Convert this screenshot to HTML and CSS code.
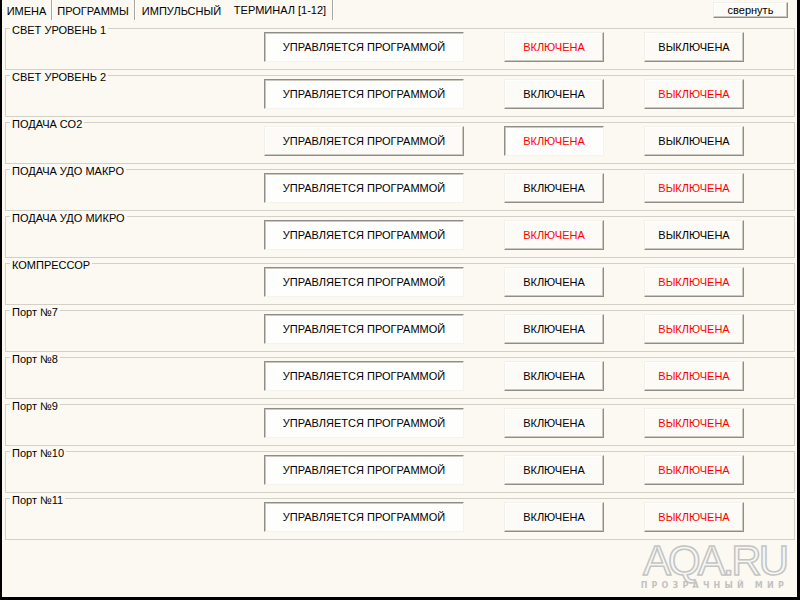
FILE: index.html
```html
<!DOCTYPE html>
<html lang="ru">
<head>
<meta charset="utf-8">
<title>Терминал</title>
<link rel="stylesheet" href="styles.css">
</head>
<body>
<div class="screen">
  <div class="topbar">
    <div class="tabs">
      <div class="tab t1 sep">ИМЕНА</div>
      <div class="tab t2 sep">ПРОГРАММЫ</div>
      <div class="tab t3">ИМПУЛЬСНЫЙ</div>
      <div class="tab t4 sep active">ТЕРМИНАЛ [1-12]</div>
    </div>
    <div class="btn collapse">свернуть</div>
  </div>
  <div class="groups">
    <div class="group"><div class="legend">СВЕТ УРОВЕНЬ 1</div><div class="btn prog down">УПРАВЛЯЕТСЯ ПРОГРАММОЙ</div><div class="btn on red">ВКЛЮЧЕНА</div><div class="btn off">ВЫКЛЮЧЕНА</div></div>
    <div class="group"><div class="legend">СВЕТ УРОВЕНЬ 2</div><div class="btn prog down">УПРАВЛЯЕТСЯ ПРОГРАММОЙ</div><div class="btn on">ВКЛЮЧЕНА</div><div class="btn off red">ВЫКЛЮЧЕНА</div></div>
    <div class="group"><div class="legend">ПОДАЧА СО2</div><div class="btn prog">УПРАВЛЯЕТСЯ ПРОГРАММОЙ</div><div class="btn on red down">ВКЛЮЧЕНА</div><div class="btn off">ВЫКЛЮЧЕНА</div></div>
    <div class="group"><div class="legend">ПОДАЧА УДО МАКРО</div><div class="btn prog down">УПРАВЛЯЕТСЯ ПРОГРАММОЙ</div><div class="btn on">ВКЛЮЧЕНА</div><div class="btn off red">ВЫКЛЮЧЕНА</div></div>
    <div class="group"><div class="legend">ПОДАЧА УДО МИКРО</div><div class="btn prog down">УПРАВЛЯЕТСЯ ПРОГРАММОЙ</div><div class="btn on red">ВКЛЮЧЕНА</div><div class="btn off">ВЫКЛЮЧЕНА</div></div>
    <div class="group"><div class="legend">КОМПРЕССОР</div><div class="btn prog down">УПРАВЛЯЕТСЯ ПРОГРАММОЙ</div><div class="btn on">ВКЛЮЧЕНА</div><div class="btn off red">ВЫКЛЮЧЕНА</div></div>
    <div class="group"><div class="legend">Порт №7</div><div class="btn prog down">УПРАВЛЯЕТСЯ ПРОГРАММОЙ</div><div class="btn on">ВКЛЮЧЕНА</div><div class="btn off red">ВЫКЛЮЧЕНА</div></div>
    <div class="group"><div class="legend">Порт №8</div><div class="btn prog down">УПРАВЛЯЕТСЯ ПРОГРАММОЙ</div><div class="btn on">ВКЛЮЧЕНА</div><div class="btn off red">ВЫКЛЮЧЕНА</div></div>
    <div class="group"><div class="legend">Порт №9</div><div class="btn prog down">УПРАВЛЯЕТСЯ ПРОГРАММОЙ</div><div class="btn on">ВКЛЮЧЕНА</div><div class="btn off red">ВЫКЛЮЧЕНА</div></div>
    <div class="group"><div class="legend">Порт №10</div><div class="btn prog down">УПРАВЛЯЕТСЯ ПРОГРАММОЙ</div><div class="btn on">ВКЛЮЧЕНА</div><div class="btn off red">ВЫКЛЮЧЕНА</div></div>
    <div class="group"><div class="legend">Порт №11</div><div class="btn prog down">УПРАВЛЯЕТСЯ ПРОГРАММОЙ</div><div class="btn on">ВКЛЮЧЕНА</div><div class="btn off red">ВЫКЛЮЧЕНА</div></div>
  </div>
  <div class="watermark">
    <div class="wm-logo">AQA.RU</div>
    <div class="wm-sub">ПРОЗРАЧНЫЙ МИР</div>
  </div>
</div>
</body>
</html>
```

FILE: styles.css
```css
html, body {
  margin: 0;
  padding: 0;
  background: #000;
}

.screen {
  position: relative;
  width: 800px;
  height: 600px;
  box-sizing: border-box;
  border-left: 2px solid #000;
  border-right: 3px solid #000;
  border-bottom: 3px solid #000;
  background: #fbf9f2;
  font-family: "Liberation Sans", Arial, sans-serif;
  font-size: 11px;
  color: #000;
  display: flex;
  flex-direction: column;
}

.topbar {
  height: 22px;
  display: flex;
  align-items: flex-start;
  justify-content: space-between;
}

.tabs {
  display: flex;
  height: 20px;
}

.tab {
  height: 20px;
  line-height: 22px;
  text-align: center;
  box-sizing: border-box;
}

.tab.sep {
  border-right: 1px solid #a9a79f;
  box-shadow: 1px 0 0 #fff;
}

.t1 { width: 50px; }
.t2 { width: 83px; }
.t3 { width: 93px; }
.t4 { width: 105px; }

.tab.active {
  line-height: 21px;
}

.btn {
  box-sizing: border-box;
  background: #fcfbf7;
  border: 1px solid;
  border-color: #f2f1ea #8f8d86 #8f8d86 #f2f1ea;
  box-shadow: inset -1px -1px 0 #cac8bf, inset 1px 1px 0 #fff;
  display: flex;
  align-items: center;
  justify-content: center;
  white-space: nowrap;
}

.btn.down {
  background: #fefefc;
  border-color: #8f8d86 #f4f3ee #f4f3ee #8f8d86;
  box-shadow: inset 1px 1px 0 #cac8bf;
}

.collapse {
  width: 75px;
  height: 16px;
  margin-top: 2px;
  margin-right: 9px;
}

.groups {
  display: flex;
  flex-direction: column;
  gap: 5px;
  margin: 6px 2px 0 3px;
}

.group {
  height: 42px;
  box-sizing: border-box;
  border: 1px solid #d3d1c7;
  padding-top: 3px;
  display: grid;
  grid-template-columns: 218px 200px 100px 100px;
  grid-template-rows: 30px;
  column-gap: 40px;
  align-items: start;
}

.legend {
  justify-self: start;
  margin-top: -8px;
  margin-left: 4px;
  padding: 0 2px;
  line-height: 13px;
  background: #fbf9f2;
  white-space: nowrap;
}

.btn.prog, .btn.on, .btn.off {
  height: 30px;
}

.red {
  color: #f00;
}

.watermark {
  position: absolute;
  right: 9px;
  bottom: 7px;
  display: flex;
  flex-direction: column;
  align-items: flex-end;
}

.wm-logo {
  font-family: "Liberation Sans", Arial, sans-serif;
  font-size: 42px;
  line-height: 34px;
  height: 34px;
  letter-spacing: -3px;
  color: #f7f7f5;
  -webkit-text-stroke: 1.5px #c4c4c2;
  margin-right: 2px;
}

.wm-sub {
  font-family: "DejaVu Sans", sans-serif;
  font-weight: bold;
  font-size: 8px;
  line-height: 9px;
  margin-top: 3px;
  letter-spacing: 4.2px;
  color: #c2c2c0;
}
```
